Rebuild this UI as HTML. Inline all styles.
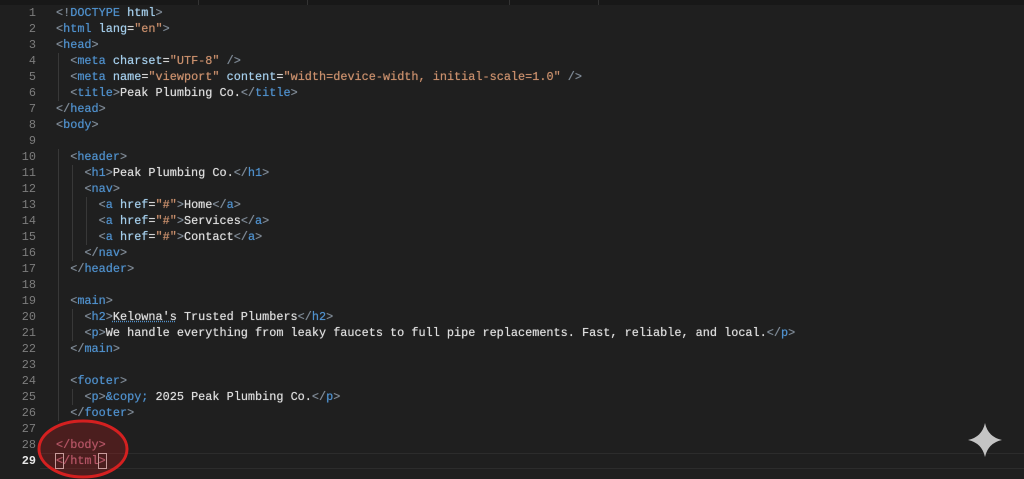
<!DOCTYPE html>
<html><head><meta charset="utf-8"><style>
html,body{margin:0;padding:0;width:1024px;height:479px;overflow:hidden;background:#1f1f1f;}
.top{position:absolute;left:0;top:0;width:1024px;height:5px;background:#181818;}
.sep{position:absolute;top:0;height:5px;width:1px;background:#333;}
.ln{position:absolute;left:0;width:36px;text-align:right;font:11.85px/16px "Liberation Mono",monospace;color:#7d7d7d;}
.c{position:absolute;left:56px;white-space:pre;font:11.85px/16px "Liberation Mono",monospace;color:#dcdcdc;text-shadow:0 0 0.6px currentColor;}
.g{position:absolute;width:1px;background:#383838;}
.b{color:#7f8a96}.t{color:#4f90cc}.a{color:#a4cdea}.s{color:#c98f6c}.x{color:#d4d4d4}
.cur{position:absolute;left:40px;top:453px;width:984px;height:16px;border-top:1px solid #2c2c2c;border-bottom:1px solid #2c2c2c;box-sizing:border-box;}
</style></head><body>
<div class="top"></div>
<div class="sep" style="left:198px"></div><div class="sep" style="left:307px"></div><div class="sep" style="left:509px"></div><div class="sep" style="left:598px"></div>
<div class="cur"></div>
<div class="g" style="left:58px;top:53px;height:48px"></div>
<div class="g" style="left:58px;top:149px;height:272px"></div>
<div class="g" style="left:72px;top:165px;height:96px"></div>
<div class="g" style="left:86px;top:197px;height:48px"></div>
<div class="g" style="left:72px;top:309px;height:32px"></div>
<div class="g" style="left:72px;top:389px;height:16px"></div>
<div class="c" style="top:5px"><span class="b">&lt;!</span><span class="t">DOCTYPE</span> <span class="a">html</span><span class="b">&gt;</span></div>
<div class="c" style="top:21px"><span class="b">&lt;</span><span class="t">html</span> <span class="a">lang</span>=<span class="s">"en"</span><span class="b">&gt;</span></div>
<div class="c" style="top:37px"><span class="b">&lt;</span><span class="t">head</span><span class="b">&gt;</span></div>
<div class="c" style="top:53px">  <span class="b">&lt;</span><span class="t">meta</span> <span class="a">charset</span>=<span class="s">"UTF-8"</span> <span class="b">/&gt;</span></div>
<div class="c" style="top:69px">  <span class="b">&lt;</span><span class="t">meta</span> <span class="a">name</span>=<span class="s">"viewport"</span> <span class="a">content</span>=<span class="s">"width=device-width, initial-scale=1.0"</span> <span class="b">/&gt;</span></div>
<div class="c" style="top:85px">  <span class="b">&lt;</span><span class="t">title</span><span class="b">&gt;</span>Peak Plumbing Co.<span class="b">&lt;/</span><span class="t">title</span><span class="b">&gt;</span></div>
<div class="c" style="top:101px"><span class="b">&lt;/</span><span class="t">head</span><span class="b">&gt;</span></div>
<div class="c" style="top:117px"><span class="b">&lt;</span><span class="t">body</span><span class="b">&gt;</span></div>
<div class="c" style="top:149px">  <span class="b">&lt;</span><span class="t">header</span><span class="b">&gt;</span></div>
<div class="c" style="top:165px">    <span class="b">&lt;</span><span class="t">h1</span><span class="b">&gt;</span>Peak Plumbing Co.<span class="b">&lt;/</span><span class="t">h1</span><span class="b">&gt;</span></div>
<div class="c" style="top:181px">    <span class="b">&lt;</span><span class="t">nav</span><span class="b">&gt;</span></div>
<div class="c" style="top:197px">      <span class="b">&lt;</span><span class="t">a</span> <span class="a">href</span>=<span class="s">"#"</span><span class="b">&gt;</span>Home<span class="b">&lt;/</span><span class="t">a</span><span class="b">&gt;</span></div>
<div class="c" style="top:213px">      <span class="b">&lt;</span><span class="t">a</span> <span class="a">href</span>=<span class="s">"#"</span><span class="b">&gt;</span>Services<span class="b">&lt;/</span><span class="t">a</span><span class="b">&gt;</span></div>
<div class="c" style="top:229px">      <span class="b">&lt;</span><span class="t">a</span> <span class="a">href</span>=<span class="s">"#"</span><span class="b">&gt;</span>Contact<span class="b">&lt;/</span><span class="t">a</span><span class="b">&gt;</span></div>
<div class="c" style="top:245px">    <span class="b">&lt;/</span><span class="t">nav</span><span class="b">&gt;</span></div>
<div class="c" style="top:261px">  <span class="b">&lt;/</span><span class="t">header</span><span class="b">&gt;</span></div>
<div class="c" style="top:293px">  <span class="b">&lt;</span><span class="t">main</span><span class="b">&gt;</span></div>
<div class="c" style="top:309px">    <span class="b">&lt;</span><span class="t">h2</span><span class="b">&gt;</span><span style="text-decoration:underline dotted #4f90cc">Kelowna's</span> Trusted Plumbers<span class="b">&lt;/</span><span class="t">h2</span><span class="b">&gt;</span></div>
<div class="c" style="top:325px">    <span class="b">&lt;</span><span class="t">p</span><span class="b">&gt;</span>We handle everything from leaky faucets to full pipe replacements. Fast, reliable, and local.<span class="b">&lt;/</span><span class="t">p</span><span class="b">&gt;</span></div>
<div class="c" style="top:341px">  <span class="b">&lt;/</span><span class="t">main</span><span class="b">&gt;</span></div>
<div class="c" style="top:373px">  <span class="b">&lt;</span><span class="t">footer</span><span class="b">&gt;</span></div>
<div class="c" style="top:389px">    <span class="b">&lt;</span><span class="t">p</span><span class="b">&gt;</span><span class="t">&amp;copy;</span> 2025 Peak Plumbing Co.<span class="b">&lt;/</span><span class="t">p</span><span class="b">&gt;</span></div>
<div class="c" style="top:405px">  <span class="b">&lt;/</span><span class="t">footer</span><span class="b">&gt;</span></div>
<div class="c" style="top:437px;color:#b06a80">&lt;/body&gt;</div>
<div class="c" style="top:453px;color:#b06a80"><span style="outline:1px solid #ccc">&lt;</span>/html<span style="outline:1px solid #ccc">&gt;</span></div>
<div class="ln" style="top:5px">1</div><div class="ln" style="top:21px">2</div><div class="ln" style="top:37px">3</div><div class="ln" style="top:53px">4</div><div class="ln" style="top:69px">5</div><div class="ln" style="top:85px">6</div><div class="ln" style="top:101px">7</div><div class="ln" style="top:117px">8</div><div class="ln" style="top:133px">9</div><div class="ln" style="top:149px">10</div><div class="ln" style="top:165px">11</div><div class="ln" style="top:181px">12</div><div class="ln" style="top:197px">13</div><div class="ln" style="top:213px">14</div><div class="ln" style="top:229px">15</div><div class="ln" style="top:245px">16</div><div class="ln" style="top:261px">17</div><div class="ln" style="top:277px">18</div><div class="ln" style="top:293px">19</div><div class="ln" style="top:309px">20</div><div class="ln" style="top:325px">21</div><div class="ln" style="top:341px">22</div><div class="ln" style="top:357px">23</div><div class="ln" style="top:373px">24</div><div class="ln" style="top:389px">25</div><div class="ln" style="top:405px">26</div><div class="ln" style="top:421px">27</div><div class="ln" style="top:437px">28</div><div class="ln" style="top:453px;color:#e8e8e8;font-weight:bold">29</div>
<svg style="position:absolute;left:0;top:0" width="1024" height="479">
<ellipse cx="83" cy="449" rx="44" ry="28" fill="rgba(190,30,30,0.28)" stroke="#d42020" stroke-width="3"/>
<path d="M985 423 Q988 437 1002 440 Q988 443 985 457 Q982 443 968 440 Q982 437 985 423Z" fill="#c4c4c4"/>
</svg>
</body></html>
